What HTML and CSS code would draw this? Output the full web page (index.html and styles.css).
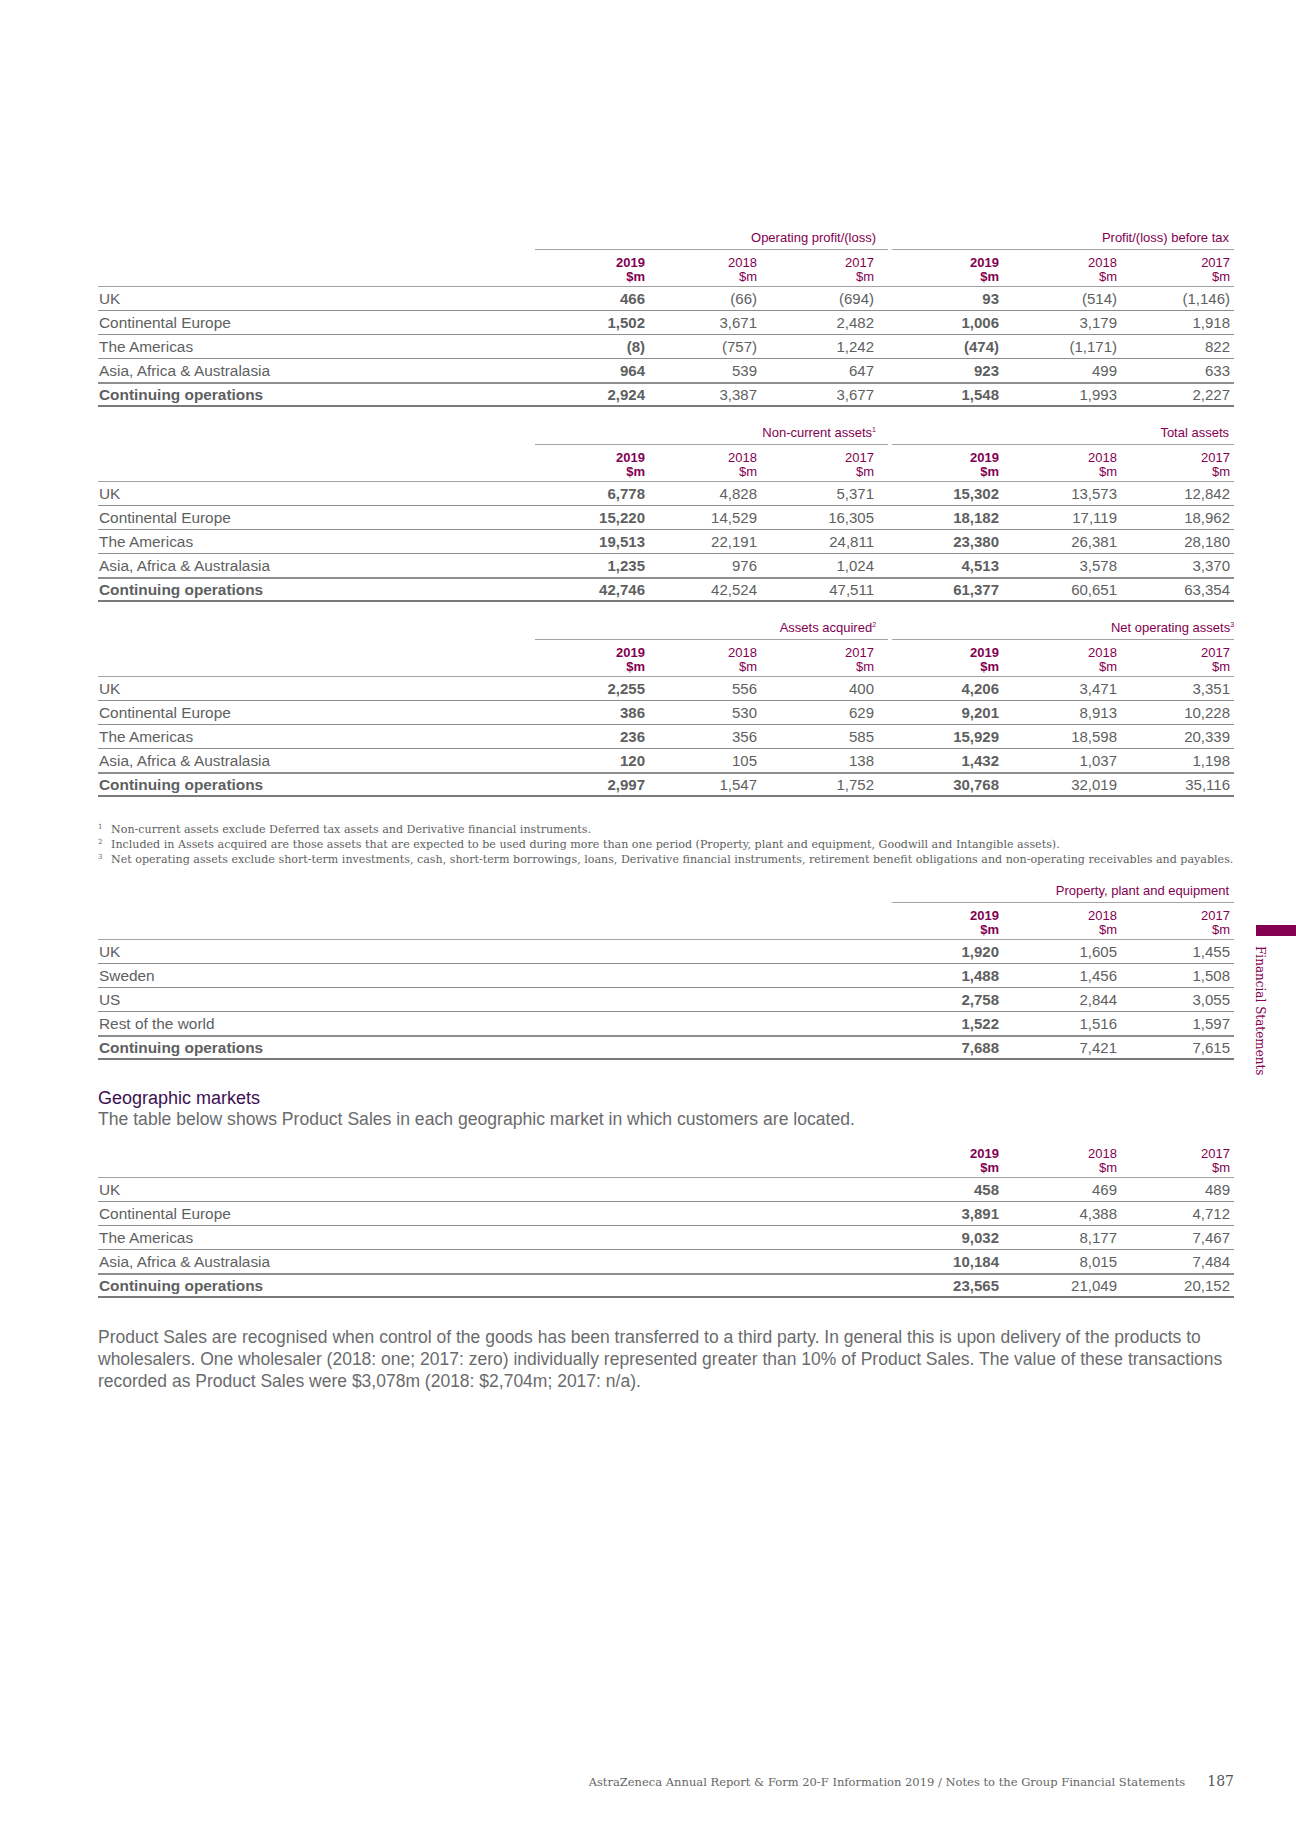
FILE: index.html
```html
<!DOCTYPE html>
<html lang="en">
<head>
<meta charset="utf-8">
<title>Notes to the Group Financial Statements</title>
<link rel="stylesheet" href="styles.css">
</head>
<body>
<div class="page">

  <table class="seg">
    <colgroup><col class="w-lbl"><col class="w-c1"><col class="w-c2"><col class="w-c3"><col class="w-gap"><col class="w-c4"><col class="w-c5"><col class="w-c6"></colgroup>
    <thead>
      <tr class="grp"><th></th><th colspan="3" class="g1">Operating profit/(loss)</th><th></th><th colspan="3" class="g2">Profit/(loss) before tax</th></tr>
      <tr class="yrs"><th></th><th class="b">2019<br>$m</th><th>2018<br>$m</th><th class="w">2017<br>$m</th><th></th><th class="b">2019<br>$m</th><th>2018<br>$m</th><th class="l">2017<br>$m</th></tr>
    </thead>
    <tbody>
      <tr><td class="lbl">UK</td><td class="b">466</td><td>(66)</td><td class="w">(694)</td><td></td><td class="b">93</td><td>(514)</td><td class="l">(1,146)</td></tr>
      <tr><td class="lbl">Continental Europe</td><td class="b">1,502</td><td>3,671</td><td class="w">2,482</td><td></td><td class="b">1,006</td><td>3,179</td><td class="l">1,918</td></tr>
      <tr><td class="lbl">The Americas</td><td class="b">(8)</td><td>(757)</td><td class="w">1,242</td><td></td><td class="b">(474)</td><td>(1,171)</td><td class="l">822</td></tr>
      <tr><td class="lbl">Asia, Africa &amp; Australasia</td><td class="b">964</td><td>539</td><td class="w">647</td><td></td><td class="b">923</td><td>499</td><td class="l">633</td></tr>
      <tr class="tot"><td class="lbl b">Continuing operations</td><td class="b">2,924</td><td>3,387</td><td class="w">3,677</td><td></td><td class="b">1,548</td><td>1,993</td><td class="l">2,227</td></tr>
    </tbody>
  </table>

  <table class="seg">
    <colgroup><col class="w-lbl"><col class="w-c1"><col class="w-c2"><col class="w-c3"><col class="w-gap"><col class="w-c4"><col class="w-c5"><col class="w-c6"></colgroup>
    <thead>
      <tr class="grp"><th></th><th colspan="3" class="g1">Non-current assets<sup>1</sup></th><th></th><th colspan="3" class="g2">Total assets</th></tr>
      <tr class="yrs"><th></th><th class="b">2019<br>$m</th><th>2018<br>$m</th><th class="w">2017<br>$m</th><th></th><th class="b">2019<br>$m</th><th>2018<br>$m</th><th class="l">2017<br>$m</th></tr>
    </thead>
    <tbody>
      <tr><td class="lbl">UK</td><td class="b">6,778</td><td>4,828</td><td class="w">5,371</td><td></td><td class="b">15,302</td><td>13,573</td><td class="l">12,842</td></tr>
      <tr><td class="lbl">Continental Europe</td><td class="b">15,220</td><td>14,529</td><td class="w">16,305</td><td></td><td class="b">18,182</td><td>17,119</td><td class="l">18,962</td></tr>
      <tr><td class="lbl">The Americas</td><td class="b">19,513</td><td>22,191</td><td class="w">24,811</td><td></td><td class="b">23,380</td><td>26,381</td><td class="l">28,180</td></tr>
      <tr><td class="lbl">Asia, Africa &amp; Australasia</td><td class="b">1,235</td><td>976</td><td class="w">1,024</td><td></td><td class="b">4,513</td><td>3,578</td><td class="l">3,370</td></tr>
      <tr class="tot"><td class="lbl b">Continuing operations</td><td class="b">42,746</td><td>42,524</td><td class="w">47,511</td><td></td><td class="b">61,377</td><td>60,651</td><td class="l">63,354</td></tr>
    </tbody>
  </table>

  <table class="seg">
    <colgroup><col class="w-lbl"><col class="w-c1"><col class="w-c2"><col class="w-c3"><col class="w-gap"><col class="w-c4"><col class="w-c5"><col class="w-c6"></colgroup>
    <thead>
      <tr class="grp"><th></th><th colspan="3" class="g1">Assets acquired<sup>2</sup></th><th></th><th colspan="3" class="g2 gs">Net operating assets<sup>3</sup></th></tr>
      <tr class="yrs"><th></th><th class="b">2019<br>$m</th><th>2018<br>$m</th><th class="w">2017<br>$m</th><th></th><th class="b">2019<br>$m</th><th>2018<br>$m</th><th class="l">2017<br>$m</th></tr>
    </thead>
    <tbody>
      <tr><td class="lbl">UK</td><td class="b">2,255</td><td>556</td><td class="w">400</td><td></td><td class="b">4,206</td><td>3,471</td><td class="l">3,351</td></tr>
      <tr><td class="lbl">Continental Europe</td><td class="b">386</td><td>530</td><td class="w">629</td><td></td><td class="b">9,201</td><td>8,913</td><td class="l">10,228</td></tr>
      <tr><td class="lbl">The Americas</td><td class="b">236</td><td>356</td><td class="w">585</td><td></td><td class="b">15,929</td><td>18,598</td><td class="l">20,339</td></tr>
      <tr><td class="lbl">Asia, Africa &amp; Australasia</td><td class="b">120</td><td>105</td><td class="w">138</td><td></td><td class="b">1,432</td><td>1,037</td><td class="l">1,198</td></tr>
      <tr class="tot"><td class="lbl b">Continuing operations</td><td class="b">2,997</td><td>1,547</td><td class="w">1,752</td><td></td><td class="b">30,768</td><td>32,019</td><td class="l">35,116</td></tr>
    </tbody>
  </table>

  <div class="notes">
    <p class="note"><span class="nn">1</span><span>Non-current assets exclude Deferred tax assets and Derivative financial instruments.</span></p>
    <p class="note"><span class="nn">2</span><span>Included in Assets acquired are those assets that are expected to be used during more than one period (Property, plant and equipment, Goodwill and Intangible assets).</span></p>
    <p class="note"><span class="nn">3</span><span>Net operating assets exclude short-term investments, cash, short-term borrowings, loans, Derivative financial instruments, retirement benefit obligations and non-operating receivables and payables.</span></p>
  </div>

  <table class="seg ppe">
    <colgroup><col class="w-wide"><col class="w-c4"><col class="w-c5"><col class="w-c6"></colgroup>
    <thead>
      <tr class="grp"><th></th><th colspan="3" class="g2">Property, plant and equipment</th></tr>
      <tr class="yrs"><th></th><th class="b">2019<br>$m</th><th>2018<br>$m</th><th class="l">2017<br>$m</th></tr>
    </thead>
    <tbody>
      <tr><td class="lbl">UK</td><td class="b">1,920</td><td>1,605</td><td class="l">1,455</td></tr>
      <tr><td class="lbl">Sweden</td><td class="b">1,488</td><td>1,456</td><td class="l">1,508</td></tr>
      <tr><td class="lbl">US</td><td class="b">2,758</td><td>2,844</td><td class="l">3,055</td></tr>
      <tr><td class="lbl">Rest of the world</td><td class="b">1,522</td><td>1,516</td><td class="l">1,597</td></tr>
      <tr class="tot"><td class="lbl b">Continuing operations</td><td class="b">7,688</td><td>7,421</td><td class="l">7,615</td></tr>
    </tbody>
  </table>

  <h2 class="sec-title">Geographic markets</h2>
  <p class="lead">The table below shows Product Sales in each geographic market in which customers are located.</p>

  <table class="seg geo">
    <colgroup><col class="w-wide"><col class="w-c4"><col class="w-c5"><col class="w-c6"></colgroup>
    <thead>
      <tr class="yrs"><th></th><th class="b">2019<br>$m</th><th>2018<br>$m</th><th class="l">2017<br>$m</th></tr>
    </thead>
    <tbody>
      <tr><td class="lbl">UK</td><td class="b">458</td><td>469</td><td class="l">489</td></tr>
      <tr><td class="lbl">Continental Europe</td><td class="b">3,891</td><td>4,388</td><td class="l">4,712</td></tr>
      <tr><td class="lbl">The Americas</td><td class="b">9,032</td><td>8,177</td><td class="l">7,467</td></tr>
      <tr><td class="lbl">Asia, Africa &amp; Australasia</td><td class="b">10,184</td><td>8,015</td><td class="l">7,484</td></tr>
      <tr class="tot"><td class="lbl b">Continuing operations</td><td class="b">23,565</td><td>21,049</td><td class="l">20,152</td></tr>
    </tbody>
  </table>

  <p class="body-text">Product Sales are recognised when control of the goods has been transferred to a third party. In general this is upon delivery of the products to wholesalers. One wholesaler (2018: one; 2017: zero) individually represented greater than 10% of Product Sales. The value of these transactions recorded as Product Sales were $3,078m (2018: $2,704m; 2017: n/a).</p>

  <footer class="foot">
    <span class="foot-txt">AstraZeneca Annual Report &amp; Form 20-F Information 2019 / Notes to the Group Financial Statements</span>
    <span class="foot-num">187</span>
  </footer>

  <div class="tab-bar"></div>
  <div class="tab-label">Financial Statements</div>
</div>
</body>
</html>
```

FILE: styles.css
```css
* { box-sizing: border-box; }

html, body {
  margin: 0;
  padding: 0;
  background: #ffffff;
}

body {
  font-family: "Liberation Sans", Arial, sans-serif;
  color: #5e5f61;
}

.page {
  position: relative;
  width: 1296px;
  min-height: 1832px;
  padding: 230px 62px 41px 98px;
  display: flex;
  flex-direction: column;
}

/* ---------- tables ---------- */
.seg {
  width: 1136px;
  table-layout: fixed;
  border-collapse: separate;
  border-spacing: 0;
}
.seg + .seg { margin-top: 18px; }

.w-lbl { width: 437px; }
.w-c1 { width: 113px; }
.w-c2 { width: 112px; }
.w-c3 { width: 128px; }
.w-gap { width: 4px; }
.w-c4 { width: 110px; }
.w-c5 { width: 118px; }
.w-c6 { width: 114px; }
.w-wide { width: 794px; }

.seg th {
  font-weight: normal;
  color: #830051;
  text-align: right;
  white-space: nowrap;
}

.grp th {
  font-size: 13px;
  line-height: 16px;
  padding: 0 0 3px 0;
}
.grp th.g1 {
  border-bottom: 1px solid #a3a3a3;
  padding-right: 12px;
}
.grp th.g2 {
  border-bottom: 1px solid #a3a3a3;
  padding-right: 5px;
}
.grp th.gs { padding-right: 0; }

.grp sup {
  font-size: 7px;
  line-height: 0;
  vertical-align: 5px;
}

.yrs th {
  font-size: 13px;
  line-height: 14px;
  padding: 6px 3px 2px 0;
  border-bottom: 1px solid #a3a3a3;
}
.yrs th.b { font-weight: bold; }

.seg td {
  font-size: 15px;
  line-height: 23px;
  padding: 0 3px 0 0;
  text-align: right;
  white-space: nowrap;
  border-bottom: 1px solid #8e8e8e;
}
.seg td.lbl {
  font-size: 15.4px;
  text-align: left;
  padding: 0 0 0 1px;
}
.seg td.b { font-weight: bold; }

.seg .w { padding-right: 14px; }
.seg .l { padding-right: 4px; }

.seg .tot td {
  line-height: 21px;
  border-top: 1px solid #8e8e8e;
  border-bottom: 2px solid #7a7a7a;
}

/* ---------- footnotes ---------- */
.notes {
  margin-top: 25px;
  font-family: "DejaVu Serif", "Liberation Serif", serif;
  font-size: 11.1px;
  line-height: 15px;
  color: #5e5f61;
}
.note {
  margin: 0;
  display: flex;
  white-space: nowrap;
}
.nn {
  width: 13px;
  flex: none;
  font-size: 7px;
  line-height: 10px;
}

.ppe { margin-top: 16px; }

/* ---------- geographic markets ---------- */
.sec-title {
  margin: 28px 0 0 0;
  font-size: 18px;
  line-height: 21px;
  font-weight: normal;
  color: #3c1053;
}
.lead {
  margin: 0;
  font-size: 17.6px;
  line-height: 21px;
  color: #6a6b6d;
}

.seg.geo { margin-top: 11px; }

.body-text {
  margin: 28px 0 0 0;
  font-size: 17.5px;
  line-height: 22px;
  color: #6a6b6d;
}

/* ---------- footer ---------- */
.foot {
  margin-top: auto;
  display: flex;
  justify-content: flex-end;
  align-items: baseline;
  gap: 22px;
  font-family: "DejaVu Serif", "Liberation Serif", serif;
}
.foot-txt {
  font-size: 11.5px;
  line-height: 18px;
  color: #666666;
}
.foot-num {
  font-size: 14px;
  line-height: 18px;
  color: #555555;
}

/* ---------- side tab ---------- */
.tab-bar {
  position: absolute;
  left: 1256px;
  top: 925px;
  width: 40px;
  height: 11px;
  background: #830051;
}
.tab-label {
  position: absolute;
  left: 1253px;
  top: 946px;
  writing-mode: vertical-rl;
  font-family: "DejaVu Serif", "Liberation Serif", serif;
  font-size: 12px;
  line-height: 13px;
  color: #830051;
  white-space: nowrap;
}
```
